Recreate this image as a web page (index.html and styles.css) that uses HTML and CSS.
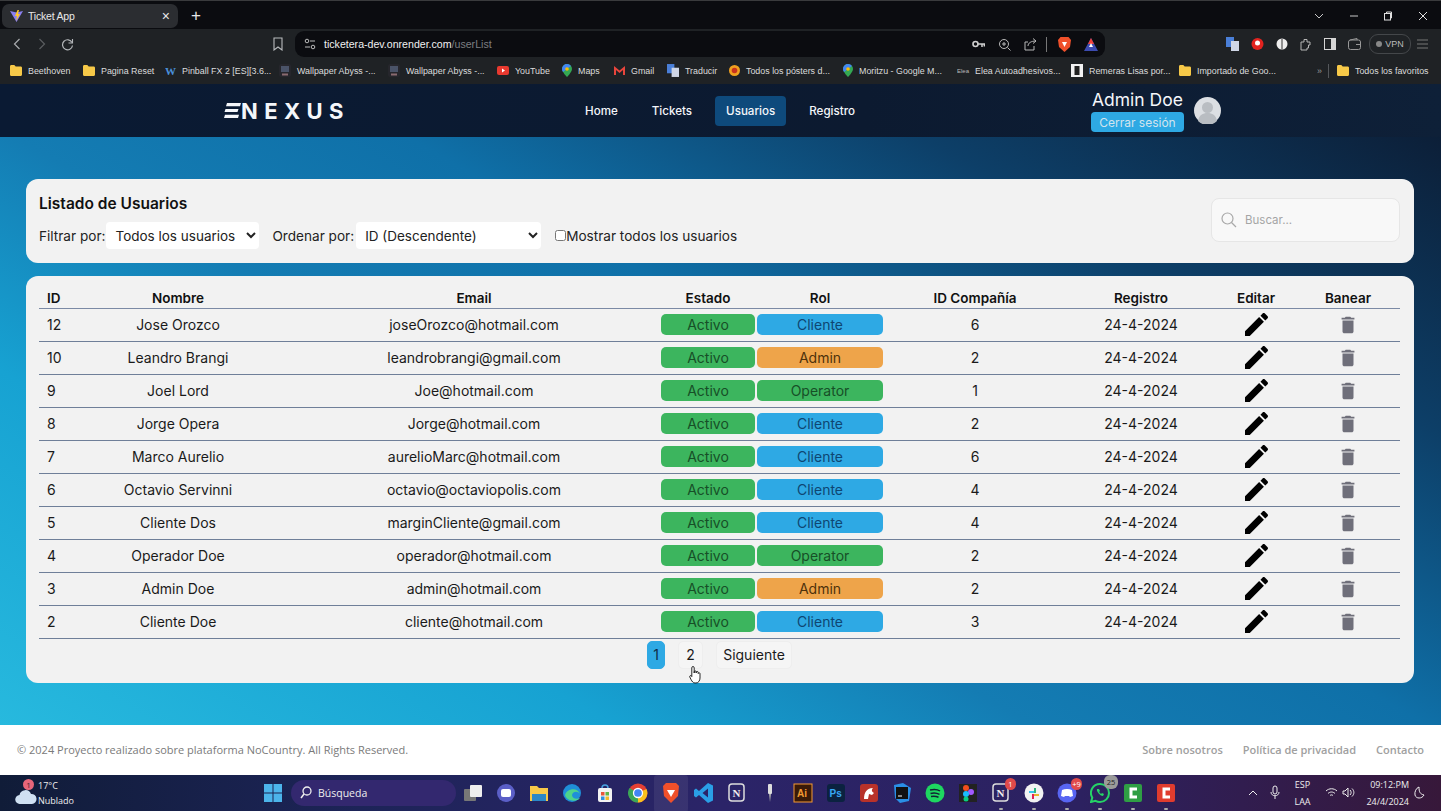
FILE: index.html
```html
<!DOCTYPE html>
<html lang="es">
<head>
<meta charset="utf-8">
<title>Ticket App</title>
<link rel="stylesheet" href="styles.css">
</head>
<body>
<svg class="defs" width="0" height="0" aria-hidden="true">
  <symbol id="i-edit" viewBox="3 3 18 18"><path d="M3 17.25V21h3.75L17.81 9.94l-3.75-3.75L3 17.25zM20.71 7.04c.39-.39.39-1.02 0-1.41l-2.34-2.34c-.39-.39-1.02-.39-1.41 0l-1.83 1.83 3.75 3.75 1.83-1.83z"/></symbol>
  <symbol id="i-del" viewBox="0 0 24 24"><path d="M6 19c0 1.1.9 2 2 2h8c1.1 0 2-.9 2-2V7H6v12zM19 4h-3.5l-1-1h-5l-1 1H5v2h14V4z"/></symbol>
  <symbol id="i-folder" viewBox="0 0 12 11"><path d="M0 1.5C0 .7.6 0 1.3 0h3l1.4 1.5h5C11.400 1.500 12 2.100 12 2.800V9.500c0 .8-.6 1.500-1.300 1.500H1.300C.6 11 0 10.300 0 9.500z" fill="#f7c948"/></symbol>
  <symbol id="i-pin" viewBox="0 0 10 13"><path d="M5 0a5 5 0 0 1 5 5c0 3-5 8-5 8S0 8 0 5a5 5 0 0 1 5-5z" fill="#34a853"/><path d="M5 0a5 5 0 0 1 4 2L1 8C.4 7 0 6 0 5a5 5 0 0 1 5-5z" fill="#4285f4"/><circle cx="5" cy="5" r="1.800" fill="#fbbc05"/></symbol>
  <symbol id="i-wall" viewBox="0 0 12 13"><rect width="12" height="13" rx="2" fill="#26262c"/><rect x="2" y="2" width="8" height="6" fill="#4a5368"/><rect x="3" y="9.500" width="6" height="2" fill="#8a6a70"/></symbol>
</svg>
<div class="screen">
  <div class="tabbar">
    <div class="tab">
      <svg class="favicon" width="13" height="13" viewBox="0 0 13 13"><path d="M0 1l6.500 11L13 1 6.500 2.500z" fill="#8a7ff0"/><path d="M7.500 0L5 6l2 0-1 5 4-7-2 0 1-4z" fill="#ffc629"/></svg>
      <span class="tab-title">Ticket App</span>
      <span class="tab-x">×</span>
    </div>
    <span class="newtab">+</span>
    <div class="winctl">
      <svg width="10" height="6" viewBox="0 0 10 6"><path d="M1 1l4 4 4-4" fill="none" stroke="#c8c8c8"/></svg>
      <svg width="10" height="10" viewBox="0 0 10 10"><path d="M1 5h8" stroke="#c8c8c8"/></svg>
      <svg width="10" height="10" viewBox="0 0 10 10"><rect x="1.500" y="2.500" width="6" height="6.500" fill="none" stroke="#e0e0e0"/><path d="M3.500 2.500V1h5v6H7.500" fill="none" stroke="#e0e0e0"/></svg>
      <svg width="10" height="10" viewBox="0 0 10 10"><path d="M1 1l8 8M9 1l-8 8" stroke="#e0e0e0"/></svg>
    </div>
  </div>
  <div class="toolbar">
    <svg class="tb-back" width="8" height="12" viewBox="0 0 8 12"><path d="M6.500 1L1.500 6l5 5" fill="none" stroke="#a8abae" stroke-width="1.200"/></svg>
    <svg class="tb-fwd" width="8" height="12" viewBox="0 0 8 12"><path d="M1.500 1l5 5-5 5" fill="none" stroke="#5a5d60" stroke-width="1.200"/></svg>
    <svg class="tb-reload" width="13" height="13" viewBox="0 0 13 13"><path d="M11 4.500A5 5 0 1 0 11.500 7.500" fill="none" stroke="#b4b7ba" stroke-width="1.200"/><path d="M11.500 1v4h-4" fill="none" stroke="#b4b7ba" stroke-width="1.100"/></svg>
    <svg class="tb-mark" width="10" height="14" viewBox="0 0 10 14"><path d="M1 1h8v12L5 10l-4 3z" fill="none" stroke="#b8bbbe" stroke-width="1.100"/></svg>
    <div class="address">
      <svg class="tune" width="12" height="12" viewBox="0 0 12 12"><circle cx="3" cy="3" r="1.800" fill="none" stroke="#bbb"/><path d="M6 3h5M1 9h5" stroke="#bbb"/><circle cx="9" cy="9" r="1.800" fill="none" stroke="#bbb"/></svg>
      <span class="url">ticketera-dev.onrender.com<span class="url-path">/userList</span></span>
      <div class="addr-right">
        <svg width="13" height="8" viewBox="0 0 13 8"><circle cx="3.500" cy="4" r="2.500" fill="none" stroke="#d0d0d0" stroke-width="1.600"/><path d="M6 4h7M10 4v3M12.300 4v2.500" stroke="#d0d0d0" stroke-width="1.500"/></svg>
        <svg width="13" height="13" viewBox="0 0 13 13"><circle cx="6" cy="6" r="4.500" fill="none" stroke="#b8b8b8"/><path d="M9.500 9.500L12.500 12.500M4 6h4M6 4v4" stroke="#b8b8b8"/></svg>
        <svg width="13" height="13" viewBox="0 0 13 13"><path d="M10 8v4H1V4h3M4 8c0-3 3-5 8-5M9 .5L12 3 9 5.500" fill="none" stroke="#b8b8b8"/></svg>
        <span class="addr-div"></span>
        <svg width="13" height="15" viewBox="0 0 13 15"><path d="M2.500 0h8L13 3l-1 7-5.500 5L1 10 0 3z" fill="#f0502a"/><path d="M4 5h5L6.500 10z" fill="#fff"/></svg>
        <svg width="14" height="13" viewBox="0 0 14 13"><path d="M7 0l7 13H0z" fill="#3c4bb0"/><path d="M7 0l3 6H4z" fill="#f0403a"/><path d="M7 5l2 4H5z" fill="#fff"/></svg>
      </div>
    </div>
    <div class="exts">
      <svg width="13" height="14" viewBox="0 0 13 14"><rect width="8" height="10" fill="#4a7fd8"/><rect x="5" y="4" width="8" height="10" fill="#cfd6e6"/></svg>
      <svg width="13" height="14" viewBox="0 0 13 14"><circle cx="6.500" cy="7" r="6" fill="#e2231f"/><circle cx="6.500" cy="6" r="2.500" fill="#fff"/></svg>
      <svg width="12" height="12" viewBox="0 0 12 12"><circle cx="6" cy="6" r="5.500" fill="#eee"/><path d="M6 1v10" stroke="#333"/></svg>
      <svg width="12" height="13" viewBox="0 0 12 13"><path d="M1 4h3V1.500h3V4h3v3H8.500v3H7v2H1z" fill="none" stroke="#b5b5b5"/></svg>
      <svg width="12" height="12" viewBox="0 0 12 12"><rect x=".5" y=".5" width="11" height="11" fill="none" stroke="#d5d5d5"/><rect x="7" y=".5" width="4.500" height="11" fill="#d5d5d5"/></svg>
      <svg width="13" height="12" viewBox="0 0 13 12"><rect x=".5" y="2" width="12" height="9.500" rx="2" fill="none" stroke="#999"/><path d="M2 2l7-1.500V2M8 6.500h4.500" fill="none" stroke="#999"/></svg>
      <span class="vpn"><span class="vpn-dot"></span>VPN</span>
      <svg class="menu" width="11" height="10" viewBox="0 0 11 10"><path d="M0 1h11M0 5h11M0 9h11" stroke="#777" stroke-width="1.100"/></svg>
    </div>
  </div>
  <div class="bookmarks">
    <a class="bm"><svg class="bm-i" width="12" height="11"><use href="#i-folder"/></svg>Beethoven</a>
    <a class="bm"><svg class="bm-i" width="12" height="11"><use href="#i-folder"/></svg>Pagina Reset</a>
    <a class="bm"><span class="bm-w">W</span>Pinball FX 2 [ES][3.6...</a>
    <a class="bm"><svg class="bm-i" width="12" height="13"><use href="#i-wall"/></svg>Wallpaper Abyss -...</a>
    <a class="bm"><svg class="bm-i" width="12" height="13"><use href="#i-wall"/></svg>Wallpaper Abyss -...</a>
    <a class="bm"><svg class="bm-i" width="12" height="9" viewBox="0 0 12 9"><rect width="12" height="9" rx="2" fill="#e8392f"/><path d="M5 2.500l3 2-3 2z" fill="#fff"/></svg>YouTube</a>
    <a class="bm"><svg class="bm-i" width="10" height="13"><use href="#i-pin"/></svg>Maps</a>
    <a class="bm"><svg class="bm-i" width="11" height="9" viewBox="0 0 11 9"><path d="M0 9V0l5.500 4.500L11 0v9H9V4L5.500 7 2 4v5z" fill="#e8453c"/></svg>Gmail</a>
    <a class="bm"><svg class="bm-i" width="12" height="13" viewBox="0 0 13 14"><rect width="8" height="10" fill="#4a7fd8"/><rect x="5" y="4" width="8" height="10" fill="#cfd6e6"/></svg>Traducir</a>
    <a class="bm"><svg class="bm-i" width="11" height="11" viewBox="0 0 11 11"><circle cx="5.500" cy="5.500" r="5.500" fill="#f0a020"/><circle cx="5.500" cy="5.500" r="2.800" fill="#c8321e"/></svg>Todos los pósters d...</a>
    <a class="bm"><svg class="bm-i" width="10" height="13"><use href="#i-pin"/></svg>Moritzu - Google M...</a>
    <a class="bm"><span class="bm-elea">Elea</span>Elea Autoadhesivos...</a>
    <a class="bm"><svg class="bm-i" width="12" height="13" viewBox="0 0 12 13"><rect width="12" height="13" fill="#f2f2f2"/><rect x="3.500" y="2" width="5" height="9" fill="#222"/></svg>Remeras Lisas por...</a>
    <a class="bm"><svg class="bm-i" width="12" height="11"><use href="#i-folder"/></svg>Importado de Goo...</a>
    <span class="bm-more">»</span>
    <span class="bm-div"></span>
    <a class="bm bm-all"><svg class="bm-i" width="12" height="11"><use href="#i-folder"/></svg>Todos los favoritos</a>
  </div>

  <nav class="nav">
    <a class="logo">
      <svg class="logo-e" width="17" height="15" viewBox="0 0 17 15"><path d="M3 0h14l-1 3.200H2zM1.500 5.900h13l-1 3.200H.5zM1 11.800h14l-1 3.200H0z" fill="#f4f6fa"/></svg>
      <span>NEXUS</span>
    </a>
    <div class="nav-links">
      <a class="nav-link">Home</a>
      <a class="nav-link">Tickets</a>
      <a class="nav-link is-active">Usuarios</a>
      <a class="nav-link">Registro</a>
    </div>
    <div class="user">
      <div class="user-text">
        <span class="user-name">Admin Doe</span>
        <button class="logout">Cerrar sesión</button>
      </div>
      <svg class="avatar" width="27" height="27" viewBox="0 0 27 27"><circle cx="13.500" cy="13.500" r="13.500" fill="#dcdfe3"/><circle cx="13.500" cy="10.500" r="5.500" fill="#b9bdc2"/><path d="M4 24c1-6 5-8 9.500-8s8.500 2 9.500 8a13.500 13.500 0 0 1-19 0z" fill="#b9bdc2"/></svg>
    </div>
  </nav>

  <main class="main">
    <section class="panel filters">
      <div class="filters-left">
        <h1 class="title">Listado de Usuarios</h1>
        <div class="controls">
          <label class="ctl">Filtrar por:
            <select class="sel sel-a"><option>Todos los usuarios</option></select>
          </label>
          <label class="ctl">Ordenar por:
            <select class="sel sel-b"><option>ID (Descendente)</option></select>
          </label>
          <label class="check"><input type="checkbox" class="checkbox">Mostrar todos los usuarios</label>
        </div>
      </div>
      <div class="search">
        <svg width="16" height="16" viewBox="0 0 16 16"><circle cx="6.500" cy="6.500" r="5.500" fill="none" stroke="#a8a8a8" stroke-width="1.200"/><path d="M10.500 10.500L15 15" stroke="#a8a8a8" stroke-width="1.200"/></svg>
        <input class="search-input" type="text" placeholder="Buscar...">
      </div>
    </section>

    <section class="panel list">
      <table class="users">
        <thead>
          <tr>
            <th class="c-id">ID</th><th class="c-name">Nombre</th><th class="c-mail">Email</th><th class="c-state">Estado</th><th class="c-rol">Rol</th><th class="c-comp">ID Compañía</th><th class="c-date">Registro</th><th class="c-edit">Editar</th><th class="c-ban">Banear</th>
          </tr>
        </thead>
        <tbody>
          <tr><td class="c-id">12</td><td>Jose Orozco</td><td class="c-mail">joseOrozco@hotmail.com</td><td><span class="pill green">Activo</span></td><td><span class="pill blue">Cliente</span></td><td>6</td><td>24-4-2024</td><td><svg class="ic-edit"><use href="#i-edit"/></svg></td><td><svg class="ic-del"><use href="#i-del"/></svg></td></tr>
          <tr><td class="c-id">10</td><td>Leandro Brangi</td><td class="c-mail">leandrobrangi@gmail.com</td><td><span class="pill green">Activo</span></td><td><span class="pill orange">Admin</span></td><td>2</td><td>24-4-2024</td><td><svg class="ic-edit"><use href="#i-edit"/></svg></td><td><svg class="ic-del"><use href="#i-del"/></svg></td></tr>
          <tr><td class="c-id">9</td><td>Joel Lord</td><td class="c-mail">Joe@hotmail.com</td><td><span class="pill green">Activo</span></td><td><span class="pill green">Operator</span></td><td>1</td><td>24-4-2024</td><td><svg class="ic-edit"><use href="#i-edit"/></svg></td><td><svg class="ic-del"><use href="#i-del"/></svg></td></tr>
          <tr><td class="c-id">8</td><td>Jorge Opera</td><td class="c-mail">Jorge@hotmail.com</td><td><span class="pill green">Activo</span></td><td><span class="pill blue">Cliente</span></td><td>2</td><td>24-4-2024</td><td><svg class="ic-edit"><use href="#i-edit"/></svg></td><td><svg class="ic-del"><use href="#i-del"/></svg></td></tr>
          <tr><td class="c-id">7</td><td>Marco Aurelio</td><td class="c-mail">aurelioMarc@hotmail.com</td><td><span class="pill green">Activo</span></td><td><span class="pill blue">Cliente</span></td><td>6</td><td>24-4-2024</td><td><svg class="ic-edit"><use href="#i-edit"/></svg></td><td><svg class="ic-del"><use href="#i-del"/></svg></td></tr>
          <tr><td class="c-id">6</td><td>Octavio Servinni</td><td class="c-mail">octavio@octaviopolis.com</td><td><span class="pill green">Activo</span></td><td><span class="pill blue">Cliente</span></td><td>4</td><td>24-4-2024</td><td><svg class="ic-edit"><use href="#i-edit"/></svg></td><td><svg class="ic-del"><use href="#i-del"/></svg></td></tr>
          <tr><td class="c-id">5</td><td>Cliente Dos</td><td class="c-mail">marginCliente@gmail.com</td><td><span class="pill green">Activo</span></td><td><span class="pill blue">Cliente</span></td><td>4</td><td>24-4-2024</td><td><svg class="ic-edit"><use href="#i-edit"/></svg></td><td><svg class="ic-del"><use href="#i-del"/></svg></td></tr>
          <tr><td class="c-id">4</td><td>Operador Doe</td><td class="c-mail">operador@hotmail.com</td><td><span class="pill green">Activo</span></td><td><span class="pill green">Operator</span></td><td>2</td><td>24-4-2024</td><td><svg class="ic-edit"><use href="#i-edit"/></svg></td><td><svg class="ic-del"><use href="#i-del"/></svg></td></tr>
          <tr><td class="c-id">3</td><td>Admin Doe</td><td class="c-mail">admin@hotmail.com</td><td><span class="pill green">Activo</span></td><td><span class="pill orange">Admin</span></td><td>2</td><td>24-4-2024</td><td><svg class="ic-edit"><use href="#i-edit"/></svg></td><td><svg class="ic-del"><use href="#i-del"/></svg></td></tr>
          <tr><td class="c-id">2</td><td>Cliente Doe</td><td class="c-mail">cliente@hotmail.com</td><td><span class="pill green">Activo</span></td><td><span class="pill blue">Cliente</span></td><td>3</td><td>24-4-2024</td><td><svg class="ic-edit"><use href="#i-edit"/></svg></td><td><svg class="ic-del"><use href="#i-del"/></svg></td></tr>
        </tbody>
      </table>
      <div class="pager">
        <button class="page page-on">1</button>
        <button class="page page-2">2<svg class="hand" width="14" height="19" viewBox="0 0 14 19"><path d="M4 1.500c.8 0 1.200.6 1.200 1.300V8V6.800c0-1.200 2-1.200 2 0V8 7.300c0-1.100 2-1.100 2 0V8.500c0-1 1.800-1 1.800.1v4.400c0 2.500-1.500 5-4 5H6c-2 0-2.800-1.500-4-3.500L.8 12c-.6-1.200 1-2 1.800-1l.2.500V2.800C2.800 2.100 3.200 1.500 4 1.500z" fill="#fff" stroke="#111" stroke-width=".9"/></svg></button>
        <button class="page page-next">Siguiente</button>
      </div>
    </section>
  </main>

  <footer class="footer">
    <span class="copy">© 2024 Proyecto realizado sobre plataforma NoCountry. All Rights Reserved.</span>
    <div class="foot-links">
      <a>Sobre nosotros</a><a>Política de privacidad</a><a>Contacto</a>
    </div>
  </footer>

  <div class="taskbar">
    <div class="weather">
      <span class="w-icon">
        <svg width="22" height="17" viewBox="0 0 22 17"><path d="M5 17a4.500 4.500 0 0 1-.5-9A6 6 0 0 1 16 7a5 5 0 0 1 1 10z" fill="#cfe0f2"/></svg>
        <span class="w-badge">1</span>
      </span>
      <div class="w-text"><span class="w-temp">17°C</span><span>Nublado</span></div>
    </div>
    <div class="task-center">
      <svg class="win" width="18" height="18" viewBox="0 0 18 18"><path d="M0 0h8.500v8.500H0zM9.500 0H18v8.500H9.500zM0 9.500h8.500V18H0zM9.500 9.500H18V18H9.500z" fill="#4cb4ea"/></svg>
      <div class="t-search">
        <svg width="12" height="13" viewBox="0 0 12 13"><circle cx="7" cy="5" r="4" fill="none" stroke="#eee" stroke-width="1.300"/><path d="M4 8L1 12" stroke="#eee" stroke-width="1.500"/></svg>
        <span>Búsqueda</span>
      </div>
      <div class="t-icons">
        <svg class="t" viewBox="0 0 20 20"><rect x="1" y="6" width="12" height="12" rx="1" fill="#777"/><rect x="7" y="2" width="12" height="12" rx="1" fill="#eee"/></svg>
        <svg class="t" viewBox="0 0 20 20"><circle cx="10" cy="10" r="9" fill="#5b5fc7"/><rect x="5" y="6" width="10" height="8" rx="2" fill="#fff"/></svg>
        <svg class="t" viewBox="0 0 20 20"><path d="M1 3h7l2 2h9v13H1z" fill="#f7c948"/><rect x="3" y="11" width="14" height="7" fill="#2b88c8"/></svg>
        <svg class="t" viewBox="0 0 20 20"><circle cx="10" cy="10" r="9" fill="#1f8fd8"/><path d="M3 12c2-7 13-8 15-1-2-3-7-3-8 1 0 3 4 5 8 3-3 4-13 4-15-3z" fill="#4ed48a"/></svg>
        <svg class="t" viewBox="0 0 20 20"><rect x="3" y="5" width="14" height="14" rx="2" fill="#f2f2f2"/><path d="M7 5a3 3 0 0 1 6 0" fill="none" stroke="#4aa3e0" stroke-width="1.500"/><rect x="6" y="9" width="3.500" height="3.500" fill="#e8553a"/><rect x="10.500" y="9" width="3.500" height="3.500" fill="#5fb548"/><rect x="6" y="13.500" width="3.500" height="3.500" fill="#2f8fe0"/><rect x="10.500" y="13.500" width="3.500" height="3.500" fill="#f2b92c"/></svg>
        <svg class="t" viewBox="0 0 20 20"><circle cx="10" cy="10" r="9.500" fill="#e53f33"/><path d="M10 10L18.500 6A9.500 9.500 0 0 1 10 19.500z" fill="#f9c01e"/><path d="M10 10v9.500A9.500 9.500 0 0 1 1.500 5z" fill="#3aa757"/><circle cx="10" cy="10" r="4.500" fill="#4285f4" stroke="#fff" stroke-width="1.300"/></svg>
        <span class="t-wrap t-active"><svg class="t" viewBox="0 0 20 20"><path d="M5 0h10l3 3-1 10-7 7-7-7L2 3z" fill="#f0502a"/><path d="M6 7h8l-4 7z" fill="#fff"/></svg></span>
        <svg class="t" viewBox="0 0 20 20"><path d="M14 0l5 2.500v15L14 20 5 12l-3 2.500L0 13V7l2-1.500L5 8zM14 5.500L8.500 10l5.500 4.500z" fill="#2a9fe6"/></svg>
        <svg class="t" viewBox="0 0 20 20"><rect x="2" y="1" width="15" height="17" rx="3" fill="none" stroke="#ddd" stroke-width="1.500"/><text x="5.500" y="14" class="t-n">N</text></svg>
        <svg class="t" viewBox="0 0 20 20"><rect x="8" y="1" width="4" height="10" rx="1" fill="#ddd"/><path d="M9 11h2l-1 8z" fill="#aaa"/></svg>
        <svg class="t" viewBox="0 0 20 20"><rect x="1" y="1" width="18" height="18" fill="#3a1a08" stroke="#f59a33"/><text x="4" y="14" class="t-ai">Ai</text></svg>
        <svg class="t" viewBox="0 0 20 20"><rect x="1" y="1" width="18" height="18" rx="3" fill="#0b2240"/><text x="3.500" y="14" class="t-ps">Ps</text></svg>
        <svg class="t" viewBox="0 0 20 20"><rect x="1" y="1" width="18" height="18" rx="3" fill="#b8322a"/><path d="M5 16c0-7 3-11 9-11-2 2-1 4 1 5l-2 2-3-1-1 5z" fill="#fff"/></svg>
        <svg class="t" viewBox="0 0 20 20"><path d="M2 2l9-2 8 5-2 13-9 2-5-5z" fill="#2a8fe6"/><rect x="4" y="4" width="12" height="12" fill="#111"/><path d="M6 13h4" stroke="#fff"/></svg>
        <svg class="t" viewBox="0 0 20 20"><circle cx="10" cy="10" r="9.500" fill="#1ed760"/><path d="M5 7c4-1 7-1 10 1M5.500 10.500c3-1 6-.8 9 .8M6 13.500c3-.6 5-.4 7.500.7" fill="none" stroke="#123" stroke-width="1.500"/></svg>
        <svg class="t" viewBox="0 0 20 20"><rect x="1" y="1" width="18" height="18" fill="#222"/><circle cx="8" cy="5" r="3" fill="#f24e1e"/><circle cx="13" cy="9" r="3" fill="#a259ff"/><circle cx="8" cy="11" r="3" fill="#1abcfe"/><circle cx="8" cy="16" r="2.500" fill="#0acf83"/></svg>
        <span class="t-wrap"><svg class="t" viewBox="0 0 20 20"><rect x="2" y="1" width="15" height="17" rx="3" fill="none" stroke="#ddd" stroke-width="1.500"/><text x="5.500" y="14" class="t-n">N</text></svg><span class="t-badge red">1</span><i class="t-dot"></i></span>
        <span class="t-wrap"><svg class="t" viewBox="0 0 20 20"><circle cx="10" cy="10" r="9.500" fill="#f2f2f2"/><rect x="5" y="8" width="5" height="2" fill="#36c5f0"/><rect x="10" y="5" width="2" height="5" fill="#2eb67d"/><rect x="10" y="11" width="5" height="2" fill="#ecb22e"/><rect x="8" y="11" width="2" height="5" fill="#e01e5a"/></svg><i class="t-dot"></i></span>
        <span class="t-wrap"><svg class="t" viewBox="0 0 20 20"><circle cx="10" cy="10" r="9.500" fill="#5865f2"/><path d="M5 7c3-1.500 7-1.500 10 0l1 6-3 1-1-1H8l-1 1-3-1z" fill="#fff"/></svg><span class="t-badge red">+9</span><i class="t-dot"></i></span>
        <span class="t-wrap"><svg class="t" viewBox="0 0 20 20"><path d="M10 1a9 9 0 0 1 0 18 9 9 0 0 1-4.500-1.200L1 19l1.300-4.300A9 9 0 0 1 10 1z" fill="none" stroke="#25d366" stroke-width="2"/><path d="M7 6c-1 2 3 7 6 7l1-2-2-1-1 1-2-2 1-1-1-2z" fill="#25d366"/></svg><span class="t-badge grey">25</span><i class="t-dot"></i></span>
        <span class="t-wrap"><svg class="t" viewBox="0 0 20 20"><rect x="1" y="1" width="18" height="18" rx="2" fill="#2f9e44"/><path d="M14 6H8v8h6" fill="none" stroke="#fff" stroke-width="3"/></svg><i class="t-dot"></i></span>
        <span class="t-wrap"><svg class="t" viewBox="0 0 20 20"><rect x="1" y="1" width="18" height="18" rx="2" fill="#e03c2e"/><path d="M14 6H8v8h6" fill="none" stroke="#fff" stroke-width="3"/></svg><i class="t-dot"></i></span>
      </div>
    </div>
    <div class="tray">
      <svg class="tr-up" width="10" height="6" viewBox="0 0 10 6"><path d="M1 5l4-4 4 4" fill="none" stroke="#eee"/></svg>
      <svg class="tr-mic" width="10" height="15" viewBox="0 0 10 15"><rect x="3" y="1" width="4" height="8" rx="2" fill="none" stroke="#eee"/><path d="M1 7c0 5 8 5 8 0M5 11v3" fill="none" stroke="#eee"/></svg>
      <div class="lang"><span>ESP</span><span>LAA</span></div>
      <svg class="tr-wifi" width="13" height="11" viewBox="0 0 13 11"><path d="M1 4c3-3 8-3 11 0M3 6.500c2-2 5-2 7 0M5 8.500c1-.8 2-.8 3 0" fill="none" stroke="#eee"/></svg>
      <svg class="tr-vol" width="13" height="11" viewBox="0 0 13 11"><path d="M1 4h2l3-3v9L3 7H1zM8 3c1.500 1.500 1.500 3.500 0 5M10 1.500c2.500 2.500 2.500 5.500 0 8" fill="none" stroke="#eee"/></svg>
      <div class="clock"><span>09:12:PM</span><span>24/4/2024</span></div>
      <svg class="tr-moon" width="11" height="13" viewBox="0 0 11 13"><path d="M5 1c0 5 1 7 5 8-2 4-8 4-9 0-.6-3 1-7 4-8z" fill="none" stroke="#eee"/></svg>
    </div>
  </div>
</div>
</body>
</html>
```

FILE: styles.css
```css
* { box-sizing: border-box; }
html, body { margin: 0; padding: 0; background: #000; }
.defs { position: absolute; }
.screen {
  width: 1441px;
  height: 811px;
  overflow: hidden;
  display: flex;
  flex-direction: column;
  font-family: Inter, "Noto Sans", sans-serif;
}

/* browser chrome */
.tabbar {
  height: 29px;
  flex: none;
  background: #0b0c10;
  border-top: 1px solid #3a3b3d;
  display: flex;
  align-items: center;
  padding: 2px 0 0 2px;
  color: #e8e8e8;
  font-family: "Liberation Sans", sans-serif;
}
.tab {
  width: 176px;
  height: 24px;
  background: #2b2d31;
  border-radius: 7px;
  display: flex;
  align-items: center;
  padding: 0 6px 0 8px;
  font-size: 10.5px;
}
.favicon { flex: none; }
.tab-title { margin-left: 5px; flex: 1; letter-spacing: -.2px; }
.tab-x { font-size: 14px; margin-right: 2px; }
.newtab { margin-left: 13px; font-size: 17px; line-height: 24px; font-weight: 300; }
.winctl {
  margin-left: auto;
  width: 114px;
  margin-right: 13px;
  display: flex;
  align-items: center;
  justify-content: space-between;
}

.toolbar {
  height: 30px;
  flex: none;
  background: #1f2225;
  display: flex;
  align-items: center;
  padding-left: 13px;
}
.tb-fwd { margin-left: 17px; }
.tb-reload { margin-left: 15px; }
.tb-mark { margin-left: 199px; }
.address {
  width: 810px;
  height: 26px;
  margin-left: 12px;
  background: #0b0c10;
  border-radius: 9px;
  display: flex;
  align-items: center;
  padding: 0 7px 0 9px;
}
.url {
  margin-left: 8px;
  font: 10.6px "Liberation Sans", sans-serif;
  color: #f0f0f0;
}
.url-path { color: #7d7f82; }
.addr-right {
  margin-left: auto;
  display: flex;
  align-items: center;
  gap: 13px;
}
.addr-div { width: 1px; height: 15px; background: #777; margin: 0 -2px 0 -4px; }
.exts {
  margin-left: 121px;
  display: flex;
  align-items: center;
  gap: 12px;
  color: #bbb;
}
.vpn {
  width: 42px;
  height: 20px;
  margin-left: -4px;
  border: 1px solid #44474a;
  border-radius: 9px;
  font: 9px "Liberation Sans", sans-serif;
  display: flex;
  align-items: center;
  justify-content: center;
  gap: 3px;
}
.vpn-dot { width: 6px; height: 6px; background: #888; border-radius: 50%; }
.menu { margin-left: -6px; }

.bookmarks {
  height: 25px;
  flex: none;
  background: #1f2225;
  display: grid;
  grid-template-columns: 73px 82px 114px 109px 109px 65px 52px 53px 62px 114px 114px 114px 108px 138px 11px 9px auto;
  align-items: center;
  padding: 0 0 2px 10px;
  font: 8.9px "Liberation Sans", sans-serif;
  color: #dcdcdc;
}
.bm { display: flex; align-items: center; white-space: nowrap; overflow: hidden; }
.bm-i { flex: none; margin-right: 6px; }
.bm-w { color: #4a8fd8; font: bold 11px "Liberation Serif", serif; width: 17px; }
.bm-elea { font-size: 6px; width: 18px; color: #bbb; }
.bm-more { color: #999; }
.bm-div { width: 1px; height: 14px; background: #55585b; }
.bm-all { overflow: visible; }

/* app nav */
.nav {
  height: 53px;
  flex: none;
  background: linear-gradient(90deg, #0a1a33, #0c1a30 60%, #0e2038);
  display: flex;
  align-items: center;
  padding: 0 0 0 224px;
  color: #f4f6fa;
}
.logo {
  flex: none;
  width: 119px;
  display: flex;
  align-items: center;
  font-weight: 700;
  font-size: 22px;
  letter-spacing: 6.4px;
  line-height: 20px;
}
.logo-e { flex: none; }
.nav-links {
  margin-left: 231px;
  display: flex;
  gap: 12px;
  font-size: 11.6px;
  font-weight: 500;
}
.nav-link { padding: 0 11px; height: 30px; line-height: 30px; border-radius: 4px; }
.is-active { background: #0e4a7c; }
.user {
  margin-left: 225px;
  display: flex;
  align-items: center;
  gap: 10px;
}
.user-text { display: flex; flex-direction: column; align-items: center; gap: 2px; margin-top: 1px; }
.user-name { font-size: 17.5px; line-height: 20px; font-weight: 400; }
.logout {
  width: 93px;
  height: 20px;
  padding: 0;
  border: 0;
  border-radius: 4px;
  background: #2ea9e4;
  color: #d2e4ee;
  font: 12px Inter, sans-serif;
}

/* main */
.main {
  flex: 1;
  padding: 42px 27px 42px 26px;
  display: flex;
  flex-direction: column;
  gap: 13px;
  background: linear-gradient(30deg, #27b9de 0%, #17a2d2 25%, #147cb3 42%, #0f70a8 58%, #0d3f68 79%, #0c1f38 100%);
}
.panel { background: #f2f2f2; border-radius: 12px; }
.filters {
  height: 84px;
  flex: none;
  display: flex;
  align-items: center;
  justify-content: space-between;
  padding: 0 14px 0 13px;
}
.filters-left { margin-bottom: 2px; }
.title { margin: 0 0 5px; font-size: 15.5px; font-weight: 600; color: #111; line-height: 26px; }
.controls { display: flex; align-items: center; font-size: 13.6px; color: #222; }
.ctl { display: flex; align-items: center; gap: 1px; white-space: nowrap; }
.ctl + .ctl { margin-left: 13px; }
.sel {
  height: 27px;
  border: 0;
  border-radius: 4px;
  background: #fff;
  color: #222;
  font: 13.5px Inter, sans-serif;
  padding: 0 3px 0 5px;
}
.sel-a { width: 153px; }
.sel-b { width: 185px; margin-left: 1px; }
.check { display: flex; align-items: center; margin-left: 14px; }
.checkbox { width: 11px; height: 11px; margin: 0; }
.search {
  width: 189px;
  height: 44px;
  margin-bottom: 2px;
  background: #f8f8f8;
  border: 1px solid #e6e6e6;
  border-radius: 8px;
  display: flex;
  align-items: center;
  gap: 6px;
  padding-left: 9px;
}
.search-input {
  flex: 1;
  width: 100%;
  min-width: 0;
  border: 0;
  background: none;
  outline: none;
  font: 11.500px Inter, sans-serif;
}
.search-input::placeholder { color: #a5a5a5; }

.list { flex: 1; padding: 10px 14px 14px 13px; }
.users {
  width: 1361px;
  table-layout: fixed;
  border-collapse: collapse;
  font-size: 14px;
  color: #1a1a1a;
  text-align: center;
}
.users th { height: 22px; font-weight: 600; font-size: 13.500px; color: #111; padding: 2px 0 0; border-bottom: 1px solid #7c8aa5; }
.users td { height: 33px; padding: 0; border-bottom: 1px solid #6f7f99; }
.users .c-id { width: 32px; text-align: left; padding-left: 8px; }
.c-name { width: 214px; }
.users .c-mail { width: 375px; padding-left: 3px; }
.c-state { width: 96px; }
.c-rol { width: 128px; }
.c-comp { width: 182px; }
.c-date { width: 150px; }
.c-edit { width: 80px; }
.c-ban { width: 104px; }
.pill {
  display: block;
  height: 21px;
  line-height: 21px;
  margin: 0 1px;
  border-radius: 5px;
}
.green { background: #3cb55e; color: #174f27; }
.blue { background: #2ea9e4; color: #0e4672; }
.orange { background: #eea44a; color: #4e320c; }
.ic-edit { width: 23px; height: 23px; display: block; margin: 0 auto; fill: #000; }
.ic-del { width: 22px; height: 22px; display: block; margin: 0 auto; fill: #6f6f7a; }

.pager {
  display: flex;
  justify-content: center;
  align-items: center;
  gap: 13px;
  padding-top: 2px;
}
.page {
  height: 28px;
  padding: 0;
  border: 1px solid #eeeeee;
  border-radius: 5px;
  background: #f5f5f5;
  color: #1a1a1a;
  font: 14px Inter, sans-serif;
  position: relative;
}
.page-on { width: 18px; background: #2ea9e4; border-color: #2ea9e4; color: #0e2a44; }
.page-2 { width: 25px; }
.page-next { width: 76px; }
.hand { position: absolute; left: 10px; top: 23px; }

/* footer */
.footer {
  height: 50px;
  flex: none;
  background: #fff;
  display: flex;
  align-items: center;
  justify-content: space-between;
  padding: 0 17px 1px;
  font: 11px "Open Sans", sans-serif;
  color: #7a7a7a;
}
.foot-links { display: flex; gap: 20px; color: #a0a0a0; font-weight: 600; }

/* taskbar */
.taskbar {
  height: 37px;
  flex: none;
  background: linear-gradient(90deg, #101c38 0%, #1d2458 25%, #2b2468 50%, #2c2160 75%, #37183a 100%);
  display: flex;
  align-items: center;
  padding-bottom: 1px;
  color: #eee;
  font: 9.500px "Open Sans", sans-serif;
  position: relative;
}
.weather { width: 264px; display: flex; align-items: center; padding-left: 15px; gap: 1px; }
.w-icon { position: relative; width: 22px; height: 22px; display: flex; align-items: flex-end; }
.w-badge {
  position: absolute;
  right: 3px;
  top: -3px;
  width: 11px;
  height: 11px;
  border-radius: 50%;
  background: #e8667a;
  color: #402030;
  font-size: 8px;
  line-height: 11px;
  text-align: center;
}
.w-text { display: flex; flex-direction: column; line-height: 15px; font-size: 9px; }
.task-center { display: flex; align-items: center; }
.win { flex: none; }
.t-search {
  width: 165px;
  height: 26px;
  margin-left: 9px;
  background: #33286f;
  border-radius: 13px;
  display: flex;
  align-items: center;
  gap: 6px;
  padding-left: 9px;
  font-size: 10.500px;
}
.t-icons {
  margin-left: 7px;
  display: flex;
  align-items: center;
  gap: 13px;
}
.t { width: 20px; height: 20px; display: block; flex: none; }
.t-wrap { position: relative; display: block; }
.t-active::before {
  content: "";
  position: absolute;
  left: -7px;
  top: -8px;
  width: 34px;
  height: 37px;
  background: rgba(255,255,255,.07);
  border-radius: 3px;
}
.t-wrap > .t { position: relative; }
.t-n { font: bold 11px "Liberation Serif", serif; fill: #eee; }
.t-ai { font: bold 10px "Liberation Sans", sans-serif; fill: #f59a33; }
.t-ps { font: bold 10px "Liberation Sans", sans-serif; fill: #38a8f5; }
.t-badge {
  position: absolute;
  top: -5px;
  right: -5px;
  min-width: 11px;
  height: 12px;
  padding: 0 1px;
  border-radius: 6px;
  font-size: 7.500px;
  line-height: 12px;
  text-align: center;
  color: #fff;
}
.red { background: #e04a4a; }
.grey { background: #9a9a9a; color: #222; min-width: 14px; height: 14px; line-height: 14px; right: -8px; top: -8px; }
.t-dot {
  position: absolute;
  left: 8px;
  bottom: -7px;
  width: 4px;
  height: 2px;
  background: #aaa;
  border-radius: 1px;
}
.tray {
  margin-left: auto;
  padding-right: 16px;
  display: flex;
  align-items: center;
}
.tr-mic { margin-left: 12px; }
.lang { margin-left: 14px; width: 17px; }
.tr-wifi { margin-left: 14px; }
.tr-vol { margin-left: 4px; }
.clock { margin-left: 12px; width: 42px; }
.tr-moon { margin-left: 5px; }
.lang, .clock { display: flex; flex-direction: column; align-items: center; line-height: 17px; font-size: 9px; white-space: nowrap; }
.clock { align-items: flex-end; }
```
